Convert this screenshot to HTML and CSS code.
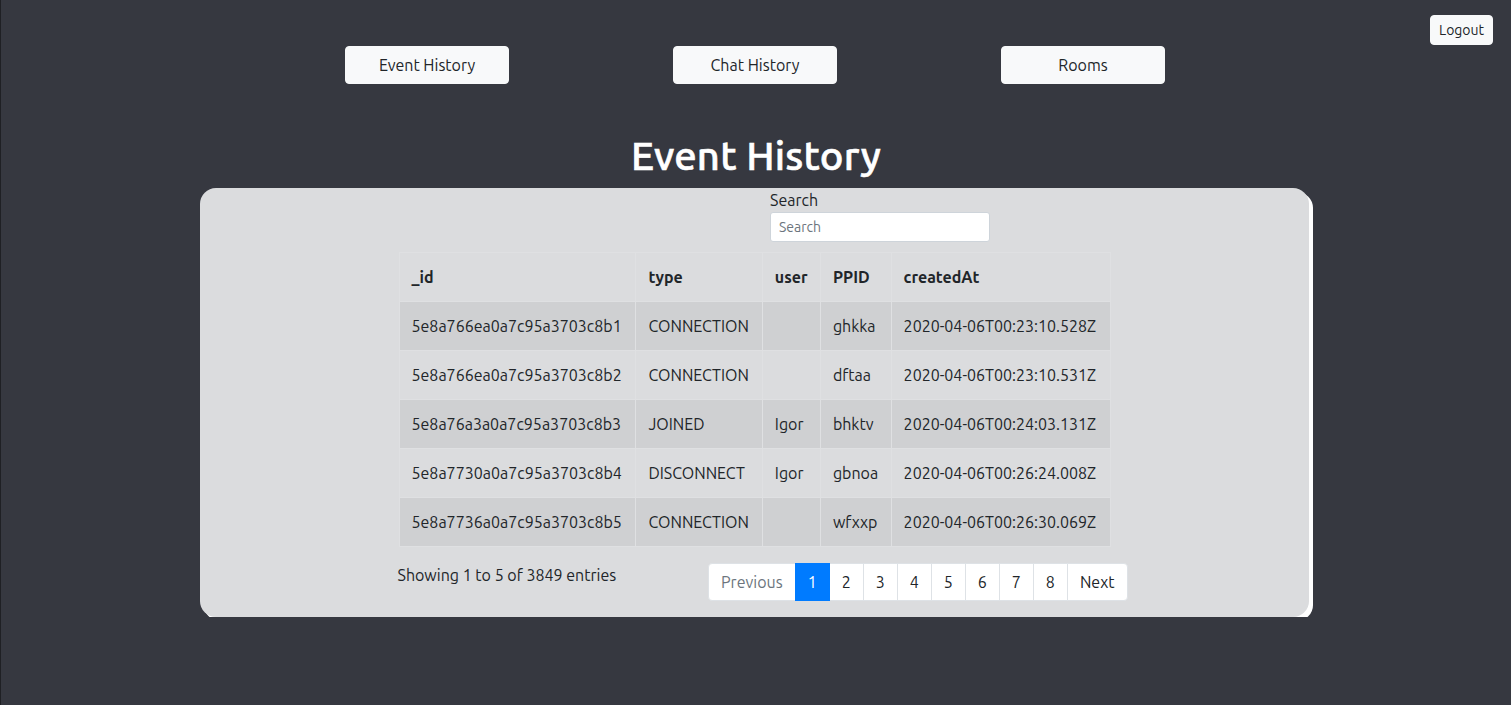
FILE: index.html
```html
<!DOCTYPE html>
<html>
<head>
<meta charset="utf-8">
<link rel="stylesheet" href="styles.css">
<title>Event History</title>
</head>
<body>
<div class="topbar"><button class="btn btn-sm">Logout</button></div>
<nav class="nav">
  <button class="btn nav-btn">Event History</button>
  <button class="btn nav-btn">Chat History</button>
  <button class="btn nav-btn">Rooms</button>
</nav>
<h1 class="title">Event History</h1>
<section class="card">
  <div class="search-row">
    <div class="half"></div>
    <div class="half search">
      <label class="search-label">Search</label>
      <input class="search-input" type="text" placeholder="Search">
    </div>
  </div>
  <table class="table">
    <thead>
      <tr><th>_id</th><th>type</th><th>user</th><th>PPID</th><th>createdAt</th></tr>
    </thead>
    <tbody>
      <tr><td>5e8a766ea0a7c95a3703c8b1</td><td>CONNECTION</td><td></td><td>ghkka</td><td>2020-04-06T00:23:10.528Z</td></tr>
      <tr><td>5e8a766ea0a7c95a3703c8b2</td><td>CONNECTION</td><td></td><td>dftaa</td><td>2020-04-06T00:23:10.531Z</td></tr>
      <tr><td>5e8a76a3a0a7c95a3703c8b3</td><td>JOINED</td><td>Igor</td><td>bhktv</td><td>2020-04-06T00:24:03.131Z</td></tr>
      <tr><td>5e8a7730a0a7c95a3703c8b4</td><td>DISCONNECT</td><td>Igor</td><td>gbnoa</td><td>2020-04-06T00:26:24.008Z</td></tr>
      <tr><td>5e8a7736a0a7c95a3703c8b5</td><td>CONNECTION</td><td></td><td>wfxxp</td><td>2020-04-06T00:26:30.069Z</td></tr>
    </tbody>
  </table>
  <div class="footer-row">
    <div class="info">Showing 1 to 5 of 3849 entries</div>
    <ul class="pagination">
      <li class="page disabled">Previous</li>
      <li class="page active">1</li>
      <li class="page">2</li>
      <li class="page">3</li>
      <li class="page">4</li>
      <li class="page">5</li>
      <li class="page">6</li>
      <li class="page">7</li>
      <li class="page">8</li>
      <li class="page">Next</li>
    </ul>
  </div>
</section>
</body>
</html>
```

FILE: styles.css
```css
html {
  background: #363840;
  border-left: 1px solid #1f2024;
  min-height: 100%;
}
body {
  margin: 0;
  font-family: Ubuntu, Lato, "Noto Sans", sans-serif;
  color: #212529;
  font-size: 16px;
  line-height: 24px;
}
.topbar {
  display: flex;
  justify-content: flex-end;
  padding: 15px 18px 0 0;
  height: 30px;
}
.btn {
  font-family: inherit;
  background: #f8f9fa;
  color: #212529;
  border: 1px solid #f8f9fa;
  border-radius: 4px;
  cursor: pointer;
}
.btn-sm {
  font-size: 14px;
  line-height: 20px;
  padding: 4px 8px;
  height: 30px;
  width: 63px;
}
.nav {
  display: flex;
  justify-content: center;
  gap: 164px;
  margin-top: 1px;
  padding-right: 2px;
}
.nav-btn {
  width: 164px;
  height: 38px;
  font-size: 16px;
  line-height: 24px;
  padding: 6px 12px;
}
.title {
  margin: 48px 0 8px;
  text-align: center;
  color: #fff;
  font-size: 40px;
  line-height: 48px;
  font-weight: 500;
  -webkit-text-stroke: 0.6px #fff;
  letter-spacing: 0.2px;
}
.card {
  width: 1109px;
  margin-left: 199px;
  background: #dbdcde;
  border-radius: 16px;
  box-shadow: 4px 4px 0 #fff;
  padding: 0 0 16px;
  display: flex;
  flex-direction: column;
  align-items: center;
}
.search-row {
  display: flex;
  width: 742px;
  margin-left: 16px;
}
.half {
  flex: 1;
}
.search {
  padding-left: 15px;
  display: flex;
  flex-direction: column;
  align-items: flex-start;
}
.search-label {
  line-height: 24px;
}
.search-input {
  width: 220px;
  height: 30px;
  box-sizing: border-box;
  border: 1px solid #ced4da;
  border-radius: 3px;
  padding: 4px 8px;
  font-family: inherit;
  font-size: 14px;
  color: #495057;
  background: #fff;
  margin-bottom: 10px;
}
.search-input::placeholder {
  color: #6c757d;
}
.table {
  border-collapse: collapse;
  width: 712px;
}
.table th,
.table td {
  border: 1px solid #dfe0e2;
  padding: 12px;
  text-align: left;
  line-height: 24px;
  white-space: nowrap;
}
.table th {
  font-weight: 700;
}
.table tbody tr:nth-child(odd) {
  background: #cfd0d2;
}
.footer-row {
  display: flex;
  justify-content: space-between;
  align-items: flex-start;
  width: 730px;
  margin-left: 16px;
  margin-top: 16px;
}
.info {
  margin-top: 0;
}
.pagination {
  display: flex;
  list-style: none;
  margin: 0;
  padding: 0;
}
.page {
  background: #fff;
  border: 1px solid #dee2e6;
  margin-left: -1px;
  padding: 6px 12px;
  line-height: 24px;
  color: #212529;
}
.page:first-child {
  margin-left: 0;
  border-radius: 4px 0 0 4px;
}
.page:last-child {
  border-radius: 0 4px 4px 0;
}
.page.disabled {
  color: #6c757d;
}
.page.active {
  background: #007bff;
  border-color: #007bff;
  color: #fff;
  z-index: 1;
}
```
